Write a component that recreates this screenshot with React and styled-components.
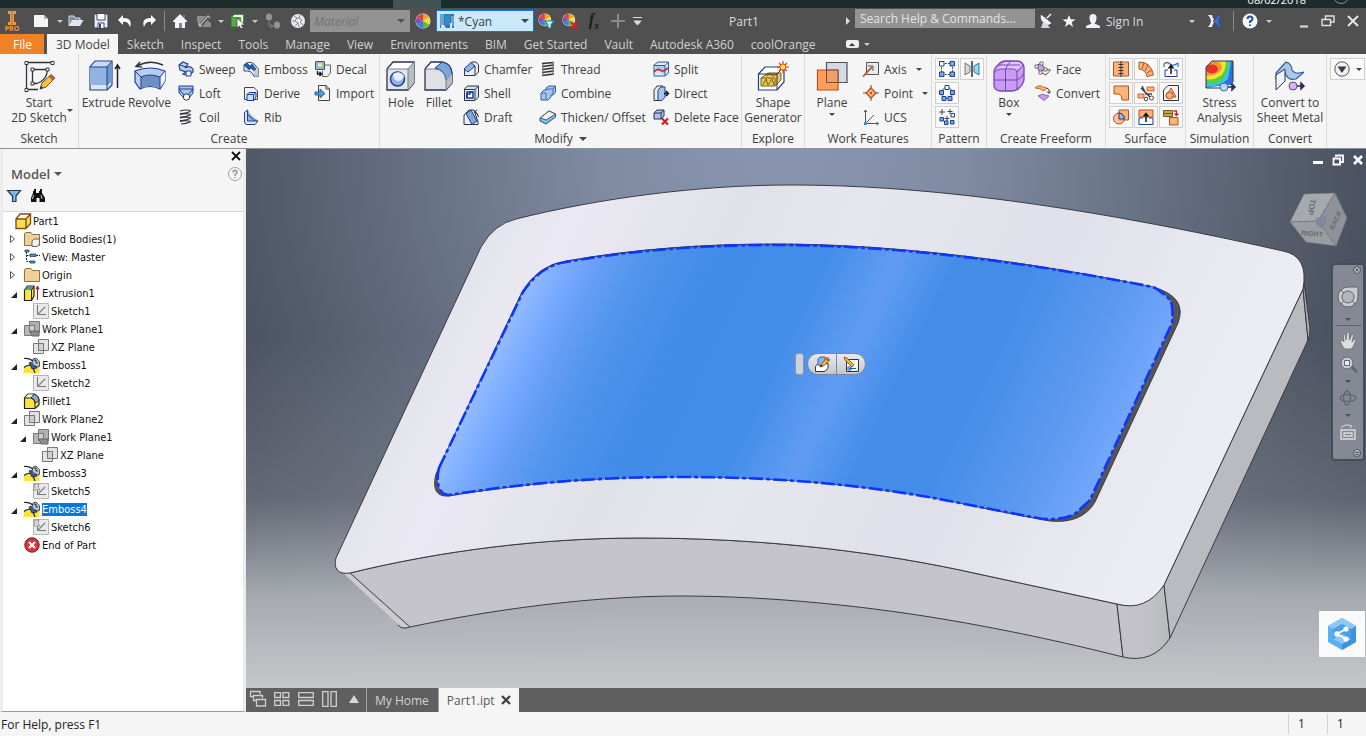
import React from "react";
import styled, { createGlobalStyle } from "styled-components";

const GlobalStyle = createGlobalStyle`
    * {
        box-sizing: border-box;
    }

    body {
        margin: 0;
        font-family: "Open Sans", "Noto Sans", sans-serif;
        font-size: 12px;
        line-height: 15px;
        color: #3c3c3c;
        background-color: #f5f5f5;
    }

    button, input, select {
        font: inherit;
        color: inherit;
        margin: 0;
    }

    button {
        border: none;
        padding: 0;
        background: none;
    }

    svg {
        display: block;
        flex: none;
    }
`;

/* ---------- drawings ---------- */

const NAVY = "#1d3f8f";
const INK = "#2b3350";
const SKY = "#9dbbe4";
const RUST = "#b5521b";
const PEACH = "#ffb27a";

const pencil = (
    <g>
        <path d="M0 9 2 5 8-2 11 1 5 7Z" fill="#f0b23c" stroke="#7a4a12" strokeWidth=".8" />
        <path d="M8-2 11 1 9 3 6 0Z" fill="#c06a3c" />
        <path d="M0 9 1 6 3 8Z" fill="#222" />
    </g>
);

const wheel = (
    <g>
        <circle cx="8" cy="8" r="7.5" fill="#e8e8e8" />
        <path d="M8 8V1a7 7 0 0 1 6.1 3.5Z" fill="#f4a12d" />
        <path d="M8 8 14.1 4.5a7 7 0 0 1 0 7Z" fill="#f2e03a" />
        <path d="M8 8 14.1 11.5A7 7 0 0 1 8 15Z" fill="#57b947" />
        <path d="M8 8V15a7 7 0 0 1-6.1-3.5Z" fill="#3c7fd6" />
        <path d="M8 8 1.9 11.5a7 7 0 0 1 0-7Z" fill="#7a4fc0" />
        <path d="M8 8 1.9 4.5A7 7 0 0 1 8 1Z" fill="#e2413a" />
    </g>
);

const folder = (
    <path d="M.5 14.5V2.5L2 1.5H7L8.5 3.5H15.5V14.5Z" fill="#f2cf96" stroke="#8f6f42" />
);

const planes = (dark) => (
    <g>
        <path d="M5.5.5H15.5V11.5H5.5Z" fill={dark ? "#b0b0b0" : "#e2e2e2"} stroke="#777" />
        <path d="M.5 4.5H10.5V14.5H.5Z" fill={dark ? "#a6a6a6" : "#ddd"} fillOpacity=".8" stroke="#777" />
        <path d="M5.5 4.5H10.5V11.5H5.5Z" fill="#cfcfcf" stroke="#777" />
    </g>
);

const sketchGlyph = (
    <g>
        <path d="M.5.5H15.5V15.5H.5Z" fill="#e9e9e9" stroke="#b5b5b5" />
        <path d="M4.5 2V11.5H13" fill="none" stroke="#777" />
        <path d="M5 11 12 4" stroke="#888" strokeWidth="1.4" />
    </g>
);

const glyphs = {
    newFile: (
        <g>
            <path d="M1 2H11L15 6V14H1Z" fill="#f4f4f6" />
            <path d="M11 2V6H15Z" fill="#aaaeb8" />
        </g>
    ),
    open: (
        <g>
            <path d="M1 13V3H6L7 5H12V7" fill="#7f8da5" stroke="#d7dde8" />
            <path d="M1 13 4 7H15.5L12 13Z" fill="#dfe5ef" />
        </g>
    ),
    save: (
        <g>
            <path d="M1 1H14L15 2V15H1Z" fill="#e9ecf2" stroke="#2f3b55" />
            <path d="M4 1V7H12V1M5 15V10H11V15" fill="#fff" stroke="#3c4965" />
            <path d="M6 11H8V15H6Z" fill="#3c4965" />
        </g>
    ),
    undo: <path d="M6 2 1 7 6 12V9Q11 8 13 14 16 5 6 5Z" fill="#fff" />,
    redo: <path d="M10 2 15 7 10 12V9Q5 8 3 14 0 5 10 5Z" fill="#fff" />,
    home: (
        <g>
            <path d="M8 1 15 8V9H13V15H3V9H1V8Z" fill="#f4f5f8" />
            <path d="M7 10H10V15H7ZM11 2H13V5L11 3Z" fill="#7c879c" />
        </g>
    ),
    swap: (
        <g fill="#8d8d8d">
            <path d="M1 3H10L5 9H1ZM15 14H6L11 7 15 10Z" />
            <path d="m3 13 9-10 2 2M3 13l3 0M3 13V9" fill="none" stroke="#b3b3b3" strokeWidth="1.4" />
        </g>
    ),
    select: (
        <g>
            <path d="M1.500 4.500 4 1.500H13.500V10L11 13.500H1.500Z" fill="#e8f5e2" stroke="#3e9a2c" />
            <path d="M1.500 4.500H10.500V13.500H1.500Z" fill="#57a846" stroke="#3e9a2c" />
            <path d="M7 5V15L9.500 13 11 16 13 15 11.500 12H15Z" fill="#fff" stroke="#333" strokeWidth=".7" />
        </g>
    ),
    parts: (
        <g fill="#929292">
            <path d="M1 2 4 0 7 2V6L4 8 1 6ZM9 10 12 8 15 10V14L12 16 9 14Z" />
            <path d="M4 9V13H8M6 11 8 13 6 15" fill="none" stroke="#858585" />
        </g>
    ),
    sphere: (
        <g>
            <circle cx="8" cy="8" r="7" fill="#e9e9ec" />
            <path d="M4 3 7 5 5 8 8 10 5 13M10 2 9 5 12 7 10 9 13 12M2 8H5M8 10 9 14M7 5H9" fill="none" stroke="#85878e" />
        </g>
    ),
    wheel,
    wheelPick: (
        <g>
            <g transform="scale(.85)">{wheel}</g>
            <path d="M7 8H16L13 11.5V15H10V11.500Z" fill="#d9f1fb" stroke="#0b86b8" />
        </g>
    ),
    wheelClear: (
        <g>
            <g transform="scale(.85)">{wheel}</g>
            <path d="M9 9 15.5 15.5M15.5 9 9 15.5" stroke="#e01f1f" strokeWidth="2" />
        </g>
    ),
    plus: <path d="M8 1V15M1 8H15" stroke="#8b8b8b" strokeWidth="2" />,
    more: <path d="M3 4.500H12M4 8H11L7.500 12Z" fill="#ddd" stroke="#ddd" />,
    swatch: (
        <g>
            <path d="M1 1H15V15H1Z" fill="#2f78b4" />
            <path d="M1 1H5V12H1ZM12 3H15V13H12Z" fill="#6ea6d2" />
            <path d="M6 2H11V12H6Z" fill="#3d89c6" />
            <path d="M2 15V12H5L7 15ZM11 15V10H13V15Z" fill="#dbe6ee" />
        </g>
    ),
    dish: (
        <g>
            <path d="M3 1Q1 9 10 12L14 10Z" fill="#f2f3f6" />
            <path d="M8 6 13 1" stroke="#f2f3f6" strokeWidth="1.500" />
            <path d="M5 9 3 15H12L9 11Z" fill="#d5d7dd" />
            <path d="M3 1 14 10" stroke="#444" />
        </g>
    ),
    star: <path d="M8 1 10 6H15.500L11 9.500 13 15 8 11.500 3 15 5 9.500.5 6H6Z" fill="#f4f4f6" stroke="#333" strokeWidth=".6" />,
    person: (
        <path d="M8 1Q12 1 11.500 6 11 9 9.500 10.500L15 13V15H1V13L6.500 10.500Q5 9 4.500 6 4 1 8 1Z" fill="#f0f1f4" />
    ),
    exchange: (
        <g>
            <path d="M1 2H5Q6 7 9 8 6 9 5 14H1Q4 11 4 8 4 5 1 2Z" fill="#e9edf7" />
            <path d="M15 2H11Q9 6 6 8 9 10 11 14H15Q12 11 12 8 12 5 15 2Z" fill="#3f6cc8" stroke="#1f3f90" strokeWidth=".6" />
        </g>
    ),
    help: (
        <g>
            <circle cx="8" cy="8" r="7.500" fill="#f6f6f8" />
            <path d="M5.500 6Q5.500 3.500 8 3.500T10.500 6Q10.500 7.500 8 8.500V10M8 11.500V13" fill="none" stroke="#2450a8" strokeWidth="2" />
        </g>
    ),
    minimize: <path d="M4 13.500H12" stroke="#e2e2e2" strokeWidth="2" />,
    restore: <path d="M5.500 6V3H14V9H10.500M2 6.500H10.500V12.500H2Z" fill="none" stroke="#e2e2e2" strokeWidth="1.400" />,
    close: <path d="m3 3 10 10M13 3 3 13" stroke="#e6e6e6" strokeWidth="2" />,
    sketch2d: (
        <g>
            <path d="M30 2.500H3.500V30M3.500 2.500V29.500H15M10 9.500H26M9.500 9V24M9.500 23.500H14Q24 20 24.500 9.500" fill="none" stroke="#30343c" strokeWidth="1.300" />
            <g fill="#fff" stroke="#30343c">
                <path d="M2 1.500H5V4.500H2ZM28 1.500H31V4.500H28ZM2 28.500H5V31.500H2ZM8 8H11V11H8ZM23 8H26V11H23ZM8 22H11V25H8Z" />
            </g>
            <path d="M17 29 19 23 28 14.500 32 18 23 27Z" fill="#f5c242" stroke="#7a4a12" />
            <path d="M28 14.500 32 18 29.500 20.500 25.500 17Z" fill="#b5683e" />
            <path d="M17 29 18 26 20 28Z" fill="#222" />
        </g>
    ),
    extrude: (
        <g>
            <path d="M2 7 7 1H24V25L19 30H2Z" fill="#dfe5ee" stroke={NAVY} strokeWidth="1.200" />
            <path d="M2 7H19V25H2Z" fill="#8fb3e2" />
            <path d="M3 6.500 7 2H23L19 6.500Z" fill="#c9dbf2" />
            <path d="M19 7 24 1V21L19 26Z" fill="#6f97cf" />
            <path d="M2 7H19V30M19 7 24 1" fill="none" stroke={NAVY} />
            <path d="M29.500 28V5M27 9 29.500 5 32 9" fill="none" stroke="#222" strokeWidth="1.500" />
        </g>
    ),
    revolve: (
        <g>
            <path d="M1 11Q16 5 31 11V21L26 29Q16 24 6 29L1 22Z" fill="#b7cdee" stroke={NAVY} strokeWidth="1.200" />
            <path d="M7 17Q16 13 26 17V28Q16 24 7 28Z" fill="#6f8fc4" />
            <path d="M26 17 31 11V21L26 28Z" fill="#f3f5f9" />
            <path d="M1 11 7 17V28M7 17Q16 13 26 17V28M26 17 31 11" fill="none" stroke={NAVY} />
            <path d="M3 6Q16-1 29 5M6 2 2 6.500 8 7" fill="none" stroke="#30343c" strokeWidth="1.500" />
        </g>
    ),
    sweep: (
        <g>
            <path d="M1 4 5 1 10 3 7 7Q12 4 15 8V11L11 14H8L5 13 8 11 2 9Z" fill="#b9d0ee" stroke={NAVY} strokeWidth="1.200" />
            <path d="M2 4 8 6M8 10H13V15H8Z" fill="#eef3fa" stroke={NAVY} />
        </g>
    ),
    loft: (
        <g>
            <path d="M1 1H15V8L11 13H6L1 8Z" fill="#a9c4ea" stroke={NAVY} />
            <path d="M1 4H15M1 4 6 10M15 4 10 10" fill="none" stroke={NAVY} />
            <circle cx="8.500" cy="12" r="3.200" fill="#fff" stroke={INK} />
        </g>
    ),
    coil: (
        <path d="M2 2Q8 0 13 2M13 2Q8 5 2 4.500M2 5.500Q8 4 13 5.500M13 5.500Q8 8.500 2 8M2 9Q8 7.500 13 9M13 9Q8 12 2 11.500M2 12.500Q8 11 13 12.500M13 12.500Q8 15 3 15" fill="none" stroke="#33363c" strokeWidth="1.200" />
    ),
    embossTool: (
        <g>
            <path d="M1 4Q6-1 11 3L15.500 8V15.500H11Q9 9 1 10Z" fill="#e4e8ef" stroke={INK} strokeWidth=".9" />
            <path d="M1 4 4 2 7 5 9 3 13 8 11 10 8 7 6 9Z" fill="#1f5fa8" stroke={NAVY} strokeWidth=".6" />
            <path d="M11 10 15.500 8V15.500H11Z" fill="#c3c7cf" />
        </g>
    ),
    derive: (
        <g>
            <path d="M1.500 14.500V2.500H11L14.500 6V14.500Z" fill="#f2f2f2" stroke="#444" />
            <path d="M4 9.500 6 7.500H13V12L11 15.500H4Z" fill="#bfe0f4" stroke={NAVY} />
            <path d="M4 9.500H10.500V15M10.500 9.500 13 7.500" fill="none" stroke={NAVY} />
        </g>
    ),
    rib: (
        <g>
            <path d="M1.500 3.500 4.500 1 6 7 15 12 12 15.500H3L1.500 13Z" fill="#dbe6f5" stroke={NAVY} />
            <path d="M4.500 2V12H14M5 6 12 12" fill="#8fb3e2" stroke={NAVY} />
        </g>
    ),
    decal: (
        <g>
            <path d="M10 4H15.500V12L12.500 15.500H7.500V10" fill="#eee" stroke="#666" />
            <path d="M.5.5H9.500V8.500H.5Z" fill="#8fb6e8" stroke="#555" />
            <circle cx="5" cy="4" r="2" fill="#f6f27a" />
            <path d="M2.500 10V13H6M4.500 11 6.500 13 4.500 15" fill="none" stroke="#111" strokeWidth="1.400" />
        </g>
    ),
    importTool: (
        <g>
            <path d="M3.500 15.500V.5H11L14.500 4V15.500Z" fill="#f5f5f5" stroke="#444" />
            <path d="M11 .5V4H14.500" fill="none" stroke="#444" />
            <path d="M0 7H5V4L10 8.500 5 13V10H0Z" fill="#4ea0dc" stroke="#154f8a" strokeWidth=".8" />
        </g>
    ),
    hole: (
        <g>
            <path d="M2 9 8 2H29V23L23 30H2Z" fill="#e2e4e8" stroke={INK} strokeWidth="1.300" />
            <path d="M3 9 8.500 3H28L23 9Z" fill="#fff" />
            <path d="M23 9 29 2V23L23 30Z" fill="#b9bcc3" />
            <path d="M2 9H23V30M23 9 29 2" fill="none" stroke="#777c88" />
            <circle cx="12.500" cy="19" r="7" fill="#8fb3e2" stroke={NAVY} strokeWidth="1.500" />
            <path d="M8 14A7 7 0 0 1 19 16Q17 22 12 21 8 19 8 14Z" fill="#e4effb" />
        </g>
    ),
    fillet: (
        <g>
            <path d="M2 9 8 2H19Q29 4 29 14V23L23 30H2Z" fill="#dfe1e6" stroke={INK} strokeWidth="1.300" />
            <path d="M3 9 8.500 3H18L13 9Z" fill="#fff" />
            <path d="M12 8 19 2Q29 4 29 15L23 20Q22 10 12 8Z" fill="#7ba6dd" stroke={NAVY} />
            <path d="M23 20 29 14V23L23 30Z" fill="#b9bcc3" />
            <path d="M2 9H12Q22 10 23 20V30" fill="none" stroke="#777c88" />
        </g>
    ),
    chamfer: (
        <g>
            <path d="M1.500 9V14.500H12L15.500 11V4L13 1H9Z" fill="#eee" stroke={INK} />
            <path d="M1 8 8 1.500 12 5 5 11Z" fill="#8fb3e8" stroke={NAVY} />
            <path d="M12 5V14.500" stroke={INK} />
        </g>
    ),
    shell: (
        <g>
            <path d="M1.500 4 4.500 1H15.500V12L12 15.500H1.500Z" fill="#d9e1ec" stroke={INK} />
            <path d="M1.500 4.500H12V15.500M12 4.500 15.500 1" fill="#eef1f6" stroke={INK} />
            <path d="M4 7H10V13H4Z" fill="#fff" stroke={NAVY} strokeWidth="1.500" />
            <path d="M4 13V9H7V7H10" fill="none" stroke={NAVY} strokeWidth="1.500" />
        </g>
    ),
    draft: (
        <g>
            <path d="M1 6 6 1 11 1 15 13V15.500H1Z" fill="#eceef2" stroke={INK} />
            <path d="M3 4.500 8 1 14 12 9 15.500Z" fill="#7fa6de" stroke={NAVY} />
            <path d="M15.500 8Q15 4 12 3M14 1 11.500 3 14 5" fill="none" stroke="#222" />
        </g>
    ),
    thread: (
        <g>
            <path d="M3 1H13V15H3Z" fill="#eee" />
            <path d="M2 2.500 14 1.500M2 5.500 14 4M2 8.500 14 7M2 11.500 14 10M2 14.500 14 13" stroke="#333" strokeWidth="1.300" />
            <path d="M3 3V15M13 1V14" stroke="#777" />
        </g>
    ),
    combine: (
        <g>
            <path d="M1 8 4 5H6V3L9 1H15.500V7L13 10H11V12L8 15H1Z" fill="#a9c4ea" stroke="#2c5fa8" />
            <path d="M6 5 8 4H13V10M1 8H6V15M13 4 15 1" fill="none" stroke="#2c5fa8" strokeWidth=".8" />
        </g>
    ),
    thicken: (
        <g>
            <path d="M0 9 9 2 15.500 5V8L6 15 0 12Z" fill="#7cc0ea" stroke="#28506f" />
            <path d="M0 9 9 2 15.500 5 6 11Z" fill="#f2f2f2" stroke="#555" />
        </g>
    ),
    split: (
        <g>
            <path d="M1 4 5 1H15.500V12L12 15H1Z" fill="#dce8f6" stroke="#2c5fa8" />
            <path d="M1 4.500H12V15M12 4.500 15.500 1" fill="#a9cdf0" stroke="#2c5fa8" />
            <path d="M1 11Q4 7 7 9T12 9L15 7" fill="none" stroke="#d21f1f" strokeWidth="1.600" />
        </g>
    ),
    direct: (
        <g>
            <path d="M1 5 4 1H10L8 4V15.500H1Z" fill="#e4eaf3" stroke={INK} />
            <path d="M5 5 8 2H12V12L9 15.500H5Z" fill="#a9c4ea" stroke={NAVY} />
            <path d="M11 8.500H15M13 6 15.500 8.500 13 11" fill="none" stroke="#111" strokeWidth="1.500" />
        </g>
    ),
    deleteFace: (
        <g>
            <path d="M1 4 4 1H11V7L8 10H1Z" fill="#a9c4ea" stroke={INK} />
            <path d="M1 4H8V10M8 4 11 1" fill="none" stroke={INK} />
            <path d="m9 9.500 6 6m0-6-6 6" stroke="#c8171c" strokeWidth="2" />
        </g>
    ),
    shapeGen: (
        <g>
            <path d="M1.500 14 8 7H27V22L20 30H1.500Z" fill="#fff" stroke={NAVY} strokeWidth="1.200" />
            <path d="M4 18 11 13 24 13V20L18 26H4Z" fill="#e9c75a" stroke="#7c6215" />
            <path d="M4 18H18V26M6 25 9 19 11 25 15 19 17 25M9 16 13 14 16 16 20 14" fill="none" stroke="#7c6215" />
            <path d="M1.500 14H20V30M20 14 27 7" fill="none" stroke={INK} />
            <path d="M26 1V13M20 7H32M22 3 30 11M30 3 22 11" stroke="#e0461a" strokeWidth="1.200" />
            <circle cx="26" cy="7" r="3" fill="#ffec4d" stroke="#e0461a" />
        </g>
    ),
    plane: (
        <g>
            <path d="M10.500 2.500H31V22.500H10.500Z" fill="#d4d9e2" stroke="#4a505c" strokeWidth="1.200" />
            <path d="M1.500 10H22V30H1.500Z" fill="#ff9d5c" stroke={RUST} strokeWidth="1.200" />
            <path d="M10.500 10H22V22.500H10.500Z" fill="#eda06c" stroke="#7c4a2c" />
        </g>
    ),
    axis: (
        <g>
            <path d="M3.500 1.500H15.500V13.500H3.500Z" fill="#e8eaee" stroke="#555" />
            <path d="M0 15.500 9 6" stroke={RUST} strokeWidth="1.800" />
            <path d="M5 5H10V10" fill="none" stroke="#555" />
        </g>
    ),
    point: (
        <g>
            <path d="M8 0V16M0 8H16" stroke="#555" />
            <path d="M8 3 13 8 8 13 3 8Z" fill={PEACH} stroke={RUST} strokeWidth="1.300" />
            <path d="M7 7H9V9H7Z" fill={RUST} />
        </g>
    ),
    ucs: (
        <g>
            <path d="M2.500 1V14.500H15.500M3 14 11 6M1 3 2.500 1 4 3M13.500 13 15.500 14.500 13.500 16" fill="none" stroke="#555" />
            <path d="M1 13H4V16H1Z" fill="#3f8ce8" />
        </g>
    ),
    rectPattern: (
        <g>
            <path d="M3 2.500H13M3 13.500H13M2.500 3V13M13.500 3V13" stroke="#555" strokeDasharray="2 1" />
            <path d="M.5.5H5V5H.5Z" fill="#fff" stroke={NAVY} />
            <path d="M11 .5H15.500V5H11ZM.5 11H5V15.500H.5ZM11 11H15.500V15.500H11Z" fill="#7aa8e6" stroke={NAVY} />
        </g>
    ),
    mirror: (
        <g>
            <path d="M1 2 6 5V11L1 14Z" fill="#d8d8d8" stroke="#777" />
            <path d="M15 2 10 5V11L15 14Z" fill="#9ed4f2" stroke="#2a7db0" />
            <path d="M8 0V16" stroke="#111" strokeWidth="1.300" />
        </g>
    ),
    circPattern: (
        <g>
            <circle cx="8" cy="8" r="5.500" fill="none" stroke="#555" />
            <path d="M6 .5H10V4.500H6Z" fill="#fff" stroke={NAVY} />
            <path d="M.5 5.500H4.500V9.500H.5ZM11.500 5.500H15.500V9.500H11.500ZM3 11.500H7V15.500H3ZM9 11.500H13V15.500H9Z" fill="#7aa8e6" stroke={NAVY} />
        </g>
    ),
    sketchPattern: (
        <g>
            <path d="M3 0V6M0 3H6M11 0V5M8.500 2.500H13.500M8 7V12M5.500 9.500H10.500" stroke="#444" />
            <path d="M12 4.500H15.500V8H12Z" fill="#fff" stroke={NAVY} />
            <path d="M1 8.500H4.500V12H1ZM5.500 12H9V15.500H5.500ZM11.500 11.500H15V15H11.500Z" fill="#7aa8e6" stroke={NAVY} />
        </g>
    ),
    box: (
        <g>
            <path d="M1 12Q1 8 5 5 8 1 13 1H25Q30 2 31 7V19Q31 23 27 27 24 31 19 31H7Q1 30 1 25Z" fill="#c79cf2" stroke="#7a44b4" strokeWidth="1.300" />
            <path d="M3 11Q8 3 13 2H25Q29 3 29 6L24 9H7Z" fill="#e2c9fb" />
            <path d="M1 13Q3 9 8 9H20Q24 9 24 14V29M24 12Q28 8 30 5M12.500 9V31M12.500 9Q15 4 18 1M1 20H24Q29 18 31 13M5 5H27" fill="none" stroke="#7a44b4" />
        </g>
    ),
    face: (
        <g>
            <path d="M1 5 6 2 10 8 5 11Z" fill="#c79cf2" stroke="#555" />
            <path d="M5 11 10 8 15.500 9 11 14Z" fill="#eee" stroke="#555" />
            <path d="M0 4H3V7H0ZM5 1H8V4H5ZM9 7H12V10H9ZM4 10H7V13H4Z" fill="#fff" stroke="#555" strokeWidth=".8" />
        </g>
    ),
    convertTool: (
        <g>
            <path d="M0 3Q4-1 8 2L12 3 9 6Q5 3 0 3Z" fill={PEACH} stroke={RUST} strokeWidth=".8" />
            <path d="M3 11Q7 8 10 10L14 11 9 15.500Q6 13 3 11Z" fill="#c79cf2" stroke="#7a44b4" strokeWidth=".8" />
            <path d="M12 3Q15 4 14 8M12 6.500 14 8.500 15.500 6.500" fill="none" stroke="#333" />
        </g>
    ),
    stitch: (
        <g>
            <path d="M.5 1H15.500V15H.5Z" fill={PEACH} stroke={RUST} />
            <path d="M8 0V16M5.500 3.500H10.500M5.500 6.500H10.500M5.500 9.500H10.500M5.500 12.500H10.500" stroke="#333" />
        </g>
    ),
    ruled: (
        <g stroke={RUST}>
            <path d="M1 1Q13 1 15.500 14L9 15.500Q8 9 1 8Z" fill={PEACH} />
            <path d="M6 2 4 8M10 4 7 10M14 9 9 12" />
        </g>
    ),
    thickenSurface: (
        <g>
            <path d="M1 3Q4 0 7 3T15 2M1 3V6M15 2V6" fill="none" stroke="#2c70c0" strokeWidth="1.200" />
            <path d="M5 9H2V15.500H14V9H11" fill="#fff" stroke={NAVY} />
            <path d="M8 13V5M5.500 7.500 8 4.500 10.500 7.500" fill="none" stroke="#111" strokeWidth="1.500" />
        </g>
    ),
    patch: <path d="M1 1H15.500V15H9Q9 10 6 9H1Z" fill={PEACH} stroke={RUST} />,
    trim: (
        <g>
            <path d="M9 2H16V6H9ZM0 9H6V13H0Z" fill={PEACH} stroke={RUST} strokeWidth=".8" />
            <path d="M3 3 12 12M4 1 8 9 14 9" fill="none" stroke="#444" strokeWidth="1.500" />
            <circle cx="13.500" cy="13" r="2" fill="#fff" stroke="#444" />
            <circle cx="8" cy="14" r="1.800" fill="#fff" stroke="#444" />
        </g>
    ),
    repair: (
        <g>
            <path d="M5 .5H15.500V15.500H.5V5Z" fill="#f1f1f1" stroke={INK} />
            <path d="M8 3 13 12H3Z" fill={PEACH} stroke={RUST} />
            <circle cx="6.500" cy="10.500" r="3.500" fill={PEACH} fillOpacity=".7" stroke={RUST} />
        </g>
    ),
    sculpt: (
        <g>
            <path d="M6 1H15.500V11H6Z" fill={PEACH} stroke={RUST} />
            <circle cx="6" cy="9.500" r="5.500" fill={PEACH} fillOpacity=".8" stroke={RUST} />
            <path d="M6 4Q11 5 11.500 10H6Z" fill={SKY} stroke={NAVY} />
        </g>
    ),
    extend: (
        <g>
            <path d="M1 1H15V8H1Z" fill={PEACH} stroke={RUST} />
            <path d="M5 9H1V15.500H15V9H11" fill="#fff" stroke={NAVY} />
            <path d="M8 13V5M5.500 7.500 8 4.500 10.500 7.500" fill="none" stroke="#111" strokeWidth="1.500" />
        </g>
    ),
    replace: (
        <g>
            <path d="M.5 1.500H9.500V7.500H.5Z" fill="#c9a94e" stroke="#6f5b1c" />
            <path d="M1 4.500H9" stroke="#6f5b1c" />
            <path d="M6.500 8.500H15V16H6.500Z" fill={PEACH} stroke={RUST} />
            <path d="M10.500 2H13.500V6M11.500 4.500 13.500 6.500 15.500 4.500" fill="none" stroke="#d21f1f" strokeWidth="1.300" />
        </g>
    ),
    stress: (
        <g>
            <path d="M2 7 8 1H29V25H20L2 28Z" fill="#2f6fe0" />
            <path d="M2 7 8 1H27L24 19Q15 27 2 27Z" fill="#35c5e8" />
            <path d="M2 7 8 1H25Q24 14 18 20 10 25 2 24Z" fill="#57cf3d" />
            <path d="M2 7 8 1H22Q22 12 16 16 9 21 2 19Z" fill="#f3e334" />
            <path d="M2 7 7 2Q18 0 18 8 16 15 2 16Z" fill="#f59a25" />
            <ellipse cx="8" cy="9" rx="6" ry="4.500" fill="#e8322c" />
            <path d="M2 7 8 1H29V22M2 7V28H16" fill="none" stroke={INK} />
            <circle cx="20" cy="27" r="4" fill="#b9d6f4" stroke="#3c6fae" />
            <path d="M24 27H30M28 24 31 27 28 30Z" fill={INK} stroke={INK} strokeWidth="1.500" />
        </g>
    ),
    sheet: (
        <g>
            <path d="M2 13 12 2Q18 4 18 10 21 15 30 12L22 19Q14 21 11 13 9 9 2 18Z" fill="#a9c8ec" stroke="#2f5f9f" strokeWidth="1.200" />
            <path d="M2 15 11 9V21L2 30Z" fill="#eef3f9" stroke={INK} />
            <circle cx="19" cy="26" r="4" fill="#d2b6f0" stroke="#6b3fa6" />
            <path d="M23 26H29M27 23 30 26 27 29Z" fill="#35205c" stroke="#35205c" strokeWidth="1.500" />
        </g>
    ),
    overflow: (
        <g>
            <circle cx="8" cy="8" r="7.200" fill="#f2f2f2" stroke="#555" />
            <path d="M3.500 5.500H12.500L8 12Z" fill="#333c4c" />
        </g>
    ),
    panelClose: <path d="m4 4 8 8M12 4 4 12" stroke="#111" strokeWidth="1.800" />,
    panelHelp: (
        <g>
            <circle cx="8" cy="8" r="6.500" fill="none" stroke="#a0a0a0" />
            <path d="M6 6.500Q6 4.500 8 4.500T10 6.500Q10 7.500 8 8.500V10M8 11V12" fill="none" stroke="#8c8c8c" strokeWidth="1.300" />
        </g>
    ),
    filter: <path d="M1.500 2.500H14.500L10 8V13.500H6.500V8Z" fill="#86b5e2" stroke="#143c66" strokeWidth="1.200" />,
    binoculars: (
        <g>
            <path d="M3 3H6V5H9V3H12V5L15 10V14H9.500V10H6.500V14H1V10L3 5ZM4 1H6V3H4ZM10 1H12V3H10Z" fill="#111" />
            <path d="M3.500 7 2.500 11M11 7 12 11" stroke="#ccc" />
        </g>
    ),
    part: (
        <g>
            <path d="M1 6 5 1H15.500V10.500L11 15.500H1Z" fill="#fbe04a" />
            <path d="M1 6 5 1H15.500L11 6Z" fill="#fff" />
            <path d="M1 6 5 1H15.500V10.500L11 15.500H1ZM1 6H11V15.500M11 6 15.500 1" fill="none" stroke="#8c4a10" strokeWidth="1.400" />
        </g>
    ),
    bodies: (
        <g>
            {folder}
            <path d="M8 10 10 8H15.500V13L13.500 15.500H8Z" fill="#f0f0f0" stroke="#666" />
        </g>
    ),
    view: (
        <g>
            <path d="M2.500 3V12.500H6M2.500 6.500H6M12 6.500H16" fill="none" stroke="#222" strokeDasharray="2 1" />
            <path d="M1 1H5V3H1ZM6 5H12V7.500H6ZM6 12H11V14H6Z" fill="#4d8fc4" stroke="#1e4a74" strokeWidth=".8" />
        </g>
    ),
    folder,
    extrusion: (
        <g>
            <path d="M.5 5 3.500 1H10V11L7.500 15.500H.5Z" fill="#ffe23b" stroke="#222" strokeWidth="1.200" />
            <path d="M1 5 3.500 1.500H10L7.500 5Z" fill="#5d8bc2" />
            <path d="M7.500 5V15M7.500 5 10 1.500" stroke="#222" />
            <path d="M13.500 15V4M12 4 13.500 1 15 4Z" fill="#c8171c" stroke="#c8171c" />
        </g>
    ),
    sketch: sketchGlyph,
    sketchShared: (
        <g>
            {sketchGlyph}
            <path d="M1 1H6L5 4 7 7H0L2 4Z" fill="#ddd" stroke="#999" />
        </g>
    ),
    workPlane: (
        <g>
            {planes(true)}
            <path d="M6 10H15V15H8Z" fill="#8c8c8c" stroke="#666" />
        </g>
    ),
    planePair: planes(false),
    emboss: (
        <g>
            <path d="M0 10Q6 6 10 10L15.500 9V16H0Z" fill="#ffe23b" />
            <path d="M9 2 12 1 15.500 4.500V9.500L12 10 8 6Z" fill="#b9c3d8" stroke="#333" strokeWidth=".8" />
            <path d="M0 1.500Q5 .5 9 4M0 10.500Q6 6 9 10.500L11 16" fill="none" stroke="#222" strokeWidth="1.200" />
            <path d="M5 6 7 5 9 9 12 9 13 11 8 12ZM10 3H12L12 6H14" fill="#3d5f9c" stroke="#1c2846" strokeWidth=".8" />
        </g>
    ),
    filletNode: (
        <g>
            <path d="M.5 5 4 1H10Q15 3 15 8V12L11 15.500H.5Z" fill="#ffe23b" stroke="#222" strokeWidth="1.200" />
            <path d="M1 5 4 1.500H9L7 5Z" fill="#fff" />
            <path d="M7 5 10 1Q15 3 15 8L11 10Q11 6 7 5Z" fill="#8ea6cc" stroke="#222" strokeWidth=".8" />
            <path d="M.5 5H7Q11 6 11 10V15" fill="none" stroke="#222" />
        </g>
    ),
    end: (
        <g>
            <circle cx="8" cy="8" r="7.200" fill="#e0303a" stroke="#5c1a1c" />
            <path d="m5 5 6 6m0-6-6 6" stroke="#fff" strokeWidth="2.200" />
        </g>
    ),
    cascade: (
        <path d="M3 5.500H.5V.5H10V3M6 9.500H3.500V4.500H12.500V7M6.500 8.500H15.500V15H6.500Z" fill="none" stroke="#d0d0d0" strokeWidth="1.300" />
    ),
    tiles: <path d="M.7 1.700H6.500V6.500H.7ZM9 1.700H14.800V6.500H9ZM.7 9.500H6.500V14.300H.7ZM9 9.500H14.800V14.300H9Z" fill="none" stroke="#d0d0d0" strokeWidth="1.300" />,
    rows: <path d="M.7 1.700H15.300V6.500H.7ZM.7 9.500H15.300V14.300H.7Z" fill="none" stroke="#d0d0d0" strokeWidth="1.300" />,
    columns: <path d="M.7.7H6V15.300H.7ZM9 .7H14.300V15.300H9Z" fill="none" stroke="#d0d0d0" strokeWidth="1.300" />,
    up: <path d="M3 12H13L8 4Z" fill="#d8d8d8" />,
    tabClose: <path d="m4 4 8 8M12 4 4 12" stroke="#444" strokeWidth="2.400" />,
    editFeature: (
        <g>
            <path d="M1.500 10.500 4 7.500H14V12L11 15.500H1.500Z" fill="#fff" stroke={INK} />
            <path d="M4 9V3L6 1H11V8L9 10Z" fill="#8fb3e8" stroke="#3a62a8" />
            <g transform="translate(6 3) scale(.9)">{pencil}</g>
        </g>
    ),
    editSketch: (
        <g>
            <path d="M3 3.500H15.500V15.500H3.500V3.500" fill="#f4f4f4" stroke="#333" />
            <path d="M6 12.500H13M5 11H8V14H5Z" fill="#fff" stroke="#1d5fa8" />
            <path d="M1 1 4 2 11 9 9 11 2 4Z" fill="#f0b23c" stroke="#7a4a12" strokeWidth=".8" />
        </g>
    ),
};

const Icon = ({ name, size = 16 }) => (
    <svg width={size} height={size} viewBox={`0 0 ${size} ${size}`} overflow="visible" aria-hidden="true">
        {glyphs[name]}
    </svg>
);

const Caret = styled.span`
    width: 0;
    height: 0;
    border: solid transparent;
    border-width: ${(props) => (props.$big ? "4px 4px 0" : "3px 3px 0")};
    border-top-color: ${(props) => props.$color || "#444"};
`;

/* ---------- window frame ---------- */

const Shell = styled.div`
    display: flex;
    flex-direction: column;
    height: 100vh;
    min-width: 1280px;
    overflow: hidden;
`;

/* sliver of the desktop above the maximised window */
const Desktop = styled.div`
    display: flex;
    justify-content: flex-end;
    gap: 27px;
    height: 8px;
    flex: none;
    overflow: hidden;
    padding-right: 17px;
    background: linear-gradient(90deg, #1c2c2c 393px, #415352 393px, #415352 441px, #1c2c2c 441px);
    color: #fff;
    font-size: 11px;
    line-height: 0;
`;

const Bubble = styled.span`
    width: 16px;
    height: 16px;
    margin-top: -12px;
    border: 1px solid #8b9292;
    border-radius: 8px;
`;

const TitleBar = styled.header`
    display: flex;
    align-items: center;
    height: 26px;
    flex: none;
    background-color: #505050;
    color: #dcdcdc;
`;

const Tool = styled.button`
    display: flex;
    align-items: center;
    justify-content: center;
    flex: none;
    width: ${(props) => props.$width || 24}px;
    height: 22px;
`;

const AppButton = styled(Tool)`
    flex-direction: column;
    height: 24px;
    color: #f09a3e;
    font-size: 7px;
    line-height: 6px;
    font-weight: 700;
`;

const Separator = styled.span`
    flex: none;
    width: 1px;
    height: 20px;
    margin: 0 ${(props) => (props.$tight ? 0 : 3)}px;
    background-color: #8a8a8a;
`;

const Combo = styled.label`
    display: flex;
    align-items: center;
    gap: 2px;
    flex: none;
    width: ${(props) => (props.$active ? 98 : 100)}px;
    height: 22px;
    padding: 0 4px 0 2px;
    border: 1px solid ${(props) => (props.$active ? "#1177d7" : "#939393")};
    background-color: ${(props) => (props.$active ? "#cbe8f8" : "#939393")};
    color: ${(props) => (props.$active ? "#3c3c3c" : "#727272")};
    font-style: ${(props) => (props.$active ? "normal" : "italic")};

    select {
        appearance: none;
        flex: 1;
        min-width: 0;
        border: none;
        padding: 0 1px;
        background: none;
        opacity: 1;
    }
`;

const Formula = styled.span`
    font: italic 700 16px "Liberation Serif", serif;
    color: #1c1c1c;

    sub {
        font-size: 10px;
    }
`;

const DocTitle = styled.span`
    flex: 1;
    padding-left: 83px;
    overflow: hidden;
`;

const Pointer = styled.span`
    margin-right: 5px;
    border: solid transparent;
    border-width: 4px 0 4px 4px;
    border-left-color: #ddd;
`;

const Search = styled.input`
    flex: 0 1 180px;
    min-width: 0;
    height: 19px;
    padding: 0 5px;
    border: none;
    background-color: #939393;
    margin-bottom: 6px;
    align-self: flex-end;

    &::placeholder {
        color: #e4e4e4;
        opacity: 1;
    }
`;

const Account = styled.button`
    display: flex;
    align-items: center;
    gap: 5px;
    width: 112px;
    margin-left: 4px;
    padding-right: 2px;
    white-space: nowrap;

    ${Caret} {
        margin-left: auto;
    }
`;

const WindowButtons = styled.div`
    display: flex;
    margin-left: 20px;
`;

const TabBar = styled.nav`
    display: flex;
    height: 20px;
    flex: none;
    background-color: #505050;
`;

const Tab = styled.button`
    padding: 0 8px 0 9px;
    color: ${(props) => (props.$active ? "#444" : "#d0d0d0")};
    background-color: ${(props) => (props.$active ? "#f5f5f5" : "transparent")};
    white-space: nowrap;
`;

const FileTab = styled(Tab)`
    width: 44px;
    margin-right: 3px;
    background-color: #f08226;
    color: #fff;
`;

const TabToggle = styled.button`
    display: flex;
    align-items: center;
    gap: 5px;
    margin-left: 22px;

    i {
        display: flex;
        align-items: center;
        justify-content: center;
        width: 13px;
        height: 8px;
        border-radius: 2px;
        background-color: #eee;
    }

    i::after {
        content: "";
        border: solid transparent;
        border-width: 0 3px 3px;
        border-bottom-color: #333;
    }
`;

/* ---------- ribbon ---------- */

const Ribbon = styled.div`
    display: flex;
    height: 95px;
    flex: none;
    margin-bottom: -1px;
    background-color: #f5f5f5;
    border-bottom: 1px solid #8a90a0;
    z-index: 1;
`;

const GroupBox = styled.section`
    display: flex;
    flex-direction: column;
    flex: none;
    width: ${(props) => props.$width}px;
    padding-top: 3px;
    border-right: 1px solid #dcdcdc;
`;

const GroupBody = styled.div`
    display: flex;
    justify-content: ${(props) => (props.$center ? "center" : "flex-start")};
    height: 72px;
    padding-left: ${(props) => (props.$center ? 0 : props.$inset || 3)}px;
`;

const GroupLabel = styled.h2`
    display: flex;
    align-items: center;
    justify-content: center;
    gap: 6px;
    margin: 0;
    height: 19px;
    font-size: 12px;
    font-weight: 400;
`;

const LargeButton = styled.button`
    position: relative;
    display: flex;
    flex-direction: column;
    align-items: center;
    flex: none;
    width: ${(props) => props.$width || 45}px;
    padding-top: 3px;
    white-space: nowrap;

    svg {
        margin-bottom: 3px;
    }

    > ${Caret} {
        margin-top: 3px;
    }
`;

const CornerCaret = styled(Caret)`
    position: absolute;
    right: 0;
    bottom: 17px;
`;

const ToolColumn = styled.div`
    display: flex;
    flex-direction: column;
    flex: none;
    width: ${(props) => (props.$width ? props.$width + "px" : "auto")};

    ${LargeButton} + & {
        margin-left: 5px;
    }
`;

const SmallButton = styled.button`
    display: flex;
    align-items: center;
    gap: 5px;
    height: 24px;
    white-space: nowrap;

    ${Caret} {
        margin-left: 4px;
    }
`;

const ToolGrid = styled.div`
    display: grid;
    grid-template-columns: repeat(${(props) => props.$columns}, 24px);
    grid-auto-rows: 22px;
    gap: 2px 1px;
    padding-top: 1px;
`;

const GridButton = styled.button`
    display: flex;
    align-items: center;
    justify-content: center;
    gap: 6px;
    border: 1px solid #cfcfcf;
    background-color: #fafafa;
`;

const OverflowButton = styled(GridButton)`
    width: 35px;
    height: 22px;
    margin: 4px 0 0 3px;
`;

/* ---------- model browser ---------- */

const Workspace = styled.div`
    display: flex;
    flex: 1;
    min-height: 0;
`;

const Browser = styled.aside`
    display: flex;
    flex-direction: column;
    flex: none;
    width: 246px;
    padding-bottom: 3px;
    border-left: 3px solid #ececec;
    border-right: 3px solid #ececec;
    border-bottom: 1px solid #9a9a9a;
    background-color: #fff;
`;

const BrowserHead = styled.div`
    display: flex;
    flex-direction: column;
    height: 64px;
    flex: none;
    border-bottom: 1px solid #d6d6d6;
    background-color: #f5f5f5;
`;

const HeadRow = styled.div`
    display: flex;
    align-items: center;
    justify-content: ${(props) => (props.$end ? "flex-end" : "space-between")};
    height: ${(props) => (props.$end ? 15 : 22)}px;
    padding-left: 8px;
`;

const HeadTools = styled.div`
    display: flex;
    align-items: center;
    gap: 8px;
    height: 22px;
    padding-left: 3px;
`;

const ModelMenu = styled.button`
    display: flex;
    align-items: center;
    gap: 4px;
    font-size: 13px;
    font-weight: 600;
    color: #555;
`;

const Tree = styled.ul`
    margin: 0;
    padding: 0;
    list-style: none;
    font-family: "DejaVu Sans Condensed", "DejaVu Sans", sans-serif;
    font-size: 11px;
    color: #111;
`;

const TreeRow = styled.li`
    display: flex;
    align-items: center;
    gap: 2px;
    height: 18px;
    padding-left: ${(props) => (props.$depth ? props.$depth * 9 - 3 : 12)}px;
`;

const Twisty = styled.span`
    display: flex;
    flex: none;
    width: 13px;
`;

const TreeName = styled.span`
    line-height: 13px;
    background-color: ${(props) => (props.$selected ? "#0a78d7" : "transparent")};
    color: ${(props) => (props.$selected ? "#fff" : "inherit")};
    white-space: nowrap;
`;

/* ---------- viewport ---------- */

const Stage = styled.main`
    display: flex;
    flex-direction: column;
    flex: 1;
    min-width: 0;
`;

const Canvas = styled.div`
    position: relative;
    display: flex;
    flex: 1;
    min-height: 0;
    overflow: hidden;
    background:
        linear-gradient(rgba(170, 175, 185, 0) 35%, rgba(170, 175, 184, 0.3) 65%, rgba(184, 187, 192, 0.85) 83%, #c6c7ca 100%),
        radial-gradient(ellipse 62% 125% at 48% 0%, #8a96b0 0%, #808ca4 25%, #687285 52%, #4e5564 80%, #3d4350 100%);

    > svg {
        flex: 1;
        min-width: 0;
        height: 100%;
    }
`;

const CanvasControls = styled.div`
    position: absolute;
    top: 1px;
    right: 0;
    display: flex;
    gap: 4px;
`;

const CubeSpot = styled.div`
    position: absolute;
    top: 41px;
    right: 19px;
`;

const NavBar = styled.div`
    position: absolute;
    top: 115px;
    right: 1px;
    width: 34px;
    height: 198px;
    border: 2px solid #454c5a;
    border-radius: 4px;
    background-color: #858993;
`;

const MiniToolbar = styled.div`
    position: absolute;
    left: 49%;
    top: 38%;
    display: flex;
    gap: 3px;
    height: 22px;
`;

const Grip = styled.span`
    width: 9px;
    border: 1px solid #8794aa;
    border-radius: 3px;
    background-color: #cdd2da;
`;

const MiniButton = styled.button`
    display: flex;
    align-items: center;
    justify-content: center;
    width: 30px;
    border: 1px solid #7d8797;
    border-radius: ${(props) => (props.$last ? "0 11px 11px 0" : "11px 0 0 11px")};
    margin-left: ${(props) => (props.$last ? -4 : 0)}px;
    background: linear-gradient(#e8eaee, #c3c7cf);
`;

const ShareButton = styled.button`
    position: absolute;
    right: 1px;
    bottom: 31px;
    display: flex;
    align-items: center;
    justify-content: center;
    width: 46px;
    height: 46px;
    background-color: #fafafa;
`;

const DocBar = styled.div`
    display: flex;
    align-items: stretch;
    height: 24px;
    flex: none;
    background-color: #5f5f5f;
    color: #d2d2d2;
`;

const DocTab = styled.button`
    display: flex;
    align-items: center;
    gap: 3px;
    padding: 0 ${(props) => (props.$active ? 5 : 9)}px 0 8px;
    border-left: 1px solid #a0a0a0;
    background-color: ${(props) => (props.$active ? "#f5f5f5" : "transparent")};
    color: ${(props) => (props.$active ? "#555" : "inherit")};
    white-space: nowrap;
`;

const StatusBar = styled.footer`
    display: flex;
    align-items: center;
    height: 24px;
    flex: none;
    padding-left: 1px;
    background-color: #f5f5f5;
    color: #222;
`;

const StatusText = styled.span`
    flex: 1;
`;

const StatusCell = styled.span`
    width: 39px;
    padding-left: 9px;
    border-left: 1px solid #d0d0d0;
    line-height: 20px;
`;

/* ---------- pieces ---------- */

const Group = ({ title, width, center, inset, menu, children }) => (
    <GroupBox $width={width}>
        <GroupBody $center={center} $inset={inset}>
            {children}
        </GroupBody>
        <GroupLabel>
            {title}
            {menu ? <Caret $big /> : null}
        </GroupLabel>
    </GroupBox>
);

const Large = ({ icon, lines, width, menu, children }) => (
    <LargeButton $width={width}>
        <Icon name={icon} size={32} />
        {lines.map((line) => (
            <span key={line}>{line}</span>
        ))}
        {menu ? <Caret /> : null}
        {children}
    </LargeButton>
);

const Column = ({ items, width }) => (
    <ToolColumn $width={width}>
        {items.map(([icon, label, menu]) => (
            <SmallButton key={label}>
                <Icon name={icon} />
                {label}
                {menu ? <Caret /> : null}
            </SmallButton>
        ))}
    </ToolColumn>
);

const IconGrid = ({ columns, items }) => (
    <ToolGrid $columns={columns}>
        {items.map(([icon, label]) => (
            <GridButton key={icon} aria-label={label}>
                <Icon name={icon} />
            </GridButton>
        ))}
    </ToolGrid>
);

const PatternGrid = styled.div`
    ${GridButton}:nth-child(n + 3) {
        grid-column-start: 1;
    }
`;

const tabs = [
    "Sketch",
    "Inspect",
    "Tools",
    "Manage",
    "View",
    "Environments",
    "BIM",
    "Get Started",
    "Vault",
    "Autodesk A360",
    "coolOrange",
];

const nodes = [
    { name: "Part1", icon: "part", depth: 0 },
    { name: "Solid Bodies(1)", icon: "bodies", depth: 1, state: "closed" },
    { name: "View: Master", icon: "view", depth: 1, state: "closed" },
    { name: "Origin", icon: "folder", depth: 1, state: "closed" },
    { name: "Extrusion1", icon: "extrusion", depth: 1, state: "open" },
    { name: "Sketch1", icon: "sketch", depth: 2 },
    { name: "Work Plane1", icon: "workPlane", depth: 1, state: "open" },
    { name: "XZ Plane", icon: "planePair", depth: 2 },
    { name: "Emboss1", icon: "emboss", depth: 1, state: "open" },
    { name: "Sketch2", icon: "sketch", depth: 2 },
    { name: "Fillet1", icon: "filletNode", depth: 1 },
    { name: "Work Plane2", icon: "planePair", depth: 1, state: "open" },
    { name: "Work Plane1", icon: "workPlane", depth: 2, state: "open" },
    { name: "XZ Plane", icon: "planePair", depth: 3 },
    { name: "Emboss3", icon: "emboss", depth: 1, state: "open" },
    { name: "Sketch5", icon: "sketchShared", depth: 2 },
    { name: "Emboss4", icon: "emboss", depth: 1, state: "open", selected: true },
    { name: "Sketch6", icon: "sketchShared", depth: 2 },
    { name: "End of Part", icon: "end", depth: 1 },
];

const TreeNode = ({ name, icon, depth, state, selected }) => (
    <TreeRow $depth={depth}>
        {depth > 0 ? (
            <Twisty>
                {state ? (
                    <svg width="7" height="10" viewBox="0 0 7 10" overflow="visible" aria-hidden="true">
                        {state === "open" ? (
                            <path d="M8 4V10H2Z" fill="#222" />
                        ) : (
                            <path d="M1.500 1.500V8.500L5.500 5Z" fill="#fff" stroke="#555" />
                        )}
                    </svg>
                ) : null}
            </Twisty>
        ) : null}
        <Icon name={icon} />
        <TreeName $selected={selected}>{name}</TreeName>
    </TreeRow>
);

const TitleTools = () => (
    <>
        <AppButton aria-label="Application menu">
            <svg width="10" height="15" viewBox="0 0 10 15" aria-hidden="true">
                <path d="M1 0H9V3H7V11H9V14H1V11H3V3H1Z" fill="#f09a3e" />
                <path d="M5 0V14" stroke="#c5701e" />
            </svg>
            PRO
        </AppButton>
        <Tool $width={33} aria-label="New"><Icon name="newFile" /></Tool>
        <Tool $width={6} aria-label="New options"><Caret $color="#ccc" /></Tool>
        <Tool $width={26} aria-label="Open"><Icon name="open" /></Tool>
        <Tool aria-label="Save"><Icon name="save" /></Tool>
        <Tool aria-label="Undo"><Icon name="undo" /></Tool>
        <Tool aria-label="Redo"><Icon name="redo" /></Tool>
        <Separator />
        <Tool aria-label="Home"><Icon name="home" /></Tool>
        <Tool aria-label="Return"><Icon name="swap" /></Tool>
        <Tool $width={10} aria-label="Return options"><Caret $color="#ccc" /></Tool>
        <Tool aria-label="Select"><Icon name="select" /></Tool>
        <Tool $width={10} aria-label="Select options"><Caret $color="#ccc" /></Tool>
        <Tool $width={26} aria-label="Parts"><Icon name="parts" /></Tool>
        <Tool aria-label="Material browser"><Icon name="sphere" /></Tool>
        <Combo>
            <select aria-label="Material" disabled>
                <option>Material</option>
            </select>
            <Caret $big $color="#555" />
        </Combo>
        <Tool $width={26} aria-label="Appearance browser"><Icon name="wheel" /></Tool>
        <Combo $active>
            <Icon name="swatch" />
            <select aria-label="Appearance">
                <option>*Cyan</option>
            </select>
            <Caret $big />
        </Combo>
        <Tool aria-label="Adjust appearance"><Icon name="wheelPick" /></Tool>
        <Tool aria-label="Clear appearance"><Icon name="wheelClear" /></Tool>
        <Tool aria-label="Parameters"><Formula>f<sub>x</sub></Formula></Tool>
        <Tool aria-label="Add"><Icon name="plus" /></Tool>
        <Tool $width={16} aria-label="Customize"><Icon name="more" /></Tool>
    </>
);

const Model = () => (
    <svg viewBox="246 148 1120 540" preserveAspectRatio="xMidYMid slice" role="img" aria-label="Part model">
        <defs>
            <linearGradient id="top" gradientUnits="userSpaceOnUse" x1="410" y1="380" x2="1080" y2="700">
                <stop offset="0" stopColor="#e4e4ed" />
                <stop offset=".1" stopColor="#eae9f3" />
                <stop offset=".3" stopColor="#e1e1ea" />
                <stop offset=".45" stopColor="#e6e6ef" />
                <stop offset=".7" stopColor="#e0e0ea" />
                <stop offset="1" stopColor="#ececf5" />
            </linearGradient>
            <linearGradient id="pocket" gradientUnits="userSpaceOnUse" x1="481" y1="380" x2="1021" y2="638">
                <stop offset="0" stopColor="#93bbff" />
                <stop offset=".05" stopColor="#78aaff" />
                <stop offset=".1" stopColor="#659df5" />
                <stop offset=".16" stopColor="#4f94ed" />
                <stop offset=".27" stopColor="#418ce8" />
                <stop offset=".43" stopColor="#428de9" />
                <stop offset=".54" stopColor="#619cf4" />
                <stop offset=".63" stopColor="#438de9" />
                <stop offset=".75" stopColor="#438de9" />
                <stop offset=".9" stopColor="#5b99f0" />
                <stop offset="1" stopColor="#72a6fa" />
            </linearGradient>
            <linearGradient id="corner">
                <stop offset="0" stopColor="#c4c3cc" />
                <stop offset=".6" stopColor="#c1c1c5" />
                <stop offset="1" stopColor="#b9babe" />
            </linearGradient>
        </defs>
        <g stroke="#3a3a3e" strokeWidth="1" strokeLinejoin="round">
            <path d="M344 574 402 628 410 627 350 573Z" fill="#cbcbd0" stroke="none" />
            <path d="M350 573C440 551 540 538 640 538 750 538 860 549 960 570L1117 604 1123 657C1060 641 1000 629 960 622 870 606 770 596 680 596 590 596 490 610 410 627Z" fill="#c5c4cd" />
            <path d="M398 625Q402 630 410 627" fill="none" />
            <path d="M1117 604Q1146 610 1164 585L1170 638Q1153 664 1123 657Z" fill="url(#corner)" />
            <path d="M1164 585 1303 289 1308 340 1170 638Z" fill="#babbc0" />
            <path d="M1304 283 1310 328Q1310 336 1308 340L1303 289Z" fill="#a9abb1" />
            <path
                d="M336 558 481 247Q494 224 516 219C600 198 700 185 790 185 890 185 1040 196 1283 251Q1309 256 1303 289L1164 585Q1146 612 1117 604L960 570C860 549 750 538 640 538 540 538 440 551 350 573 338 575 333 568 336 558Z"
                fill="url(#top)"
            />
            <path
                d="M436 474 522 292Q538 265 566 261C640 248 710 244 775 244 900 244 1030 262 1153 287Q1188 297 1178 323L1095 502Q1082 524 1050 521 1000 512 960 503C860 483 770 477 680 477 590 477 520 484 449 496 434 497 433 486 436 474Z"
                fill="#55565b"
            />
        </g>
        <path
            d="M439 468 523 292Q540 266 566 262C640 249 710 245 775 245 900 245 1030 263 1153 287Q1160 290 1168 298 1174 302 1172 323L1090 500 1076 513Q1066 520 1043 519 1000 511 960 503C860 483 770 477 680 477 590 477 520 484 449 495 437 494 436 480 439 468Z"
            fill="url(#pocket)"
            stroke="#0c35ff"
            strokeWidth="2.600"
            strokeDasharray="14 3 4 3"
        />
    </svg>
);

const ViewCube = () => (
    <svg width="60" height="60" viewBox="0 0 60 60" aria-label="View cube">
        <g stroke="#72767d" strokeWidth=".8" strokeDasharray="5 2">
            <path d="M17 5 48 4 31 32 3 33Z" fill="#a6a9ae" />
            <path d="M48 4 60 29 49 57 31 32Z" fill="#8f9399" />
            <path d="M3 33 31 32 49 57 19 53Z" fill="#9a9da2" />
        </g>
        <path d="M29 29 38 27 40 34 34 39 29 35Z" fill="#7f899b" />
        <g fill="#666a72" fontFamily="Liberation Sans, sans-serif" fontSize="8" fontWeight="700" textAnchor="middle">
            <text transform="translate(25 18) rotate(100)" y="3">TOP</text>
            <text transform="translate(25 44) rotate(4)" fontSize="7" y="3">RIGHT</text>
            <text transform="translate(48 31) rotate(-65)" fontSize="7" y="3">BACK</text>
        </g>
    </svg>
);

const NavGlyphs = () => (
    <svg width="30" height="194" viewBox="0 0 30 194" aria-label="Navigation bar">
        <g fill="none" stroke="#50555f">
            <circle cx="24" cy="5" r="3.500" fill="#b5b8be" />
            <path d="m22.500 3.500 3 3m0-3-3 3" />
            <circle cx="24" cy="188" r="3.500" fill="#b5b8be" />
            <path d="M22 187.500H26M22.500 189.500H25.500" />
            <path d="M2 60.500H28" stroke="#5d626d" />
        </g>
        <path d="M5 32A10 10 0 0 1 15 22H25V32A10 10 0 0 1 5 32Z" fill="#c9cbd0" stroke="#60656f" />
        <circle cx="15" cy="32" r="6" fill="#b2b5bb" stroke="#60656f" />
        <path d="m8 25 3 3M22 39l-3-3M8 39l3-3" stroke="#60656f" />
        <path d="M12 53H18L15 56ZM12 115H18L15 118ZM12 149H18L15 152Z" fill="#4d525d" />
        <path d="M10 82 7 76 9 75 11 77 10 69 12 69 13 75 14 67 16 67 16.500 75 19 69 20.500 70 19 77 21 74 23 75 20 82 18 84H12Z" fill="#dcdde0" stroke="#60656f" strokeWidth=".7" />
        <path d="m18 101 6 6" stroke="#60656f" strokeWidth="3" />
        <circle cx="14" cy="98" r="6" fill="#c9cbd0" stroke="#60656f" />
        <path d="M11.500 95.500H16.500V100.500H11.500Z" fill="#eee" stroke="#60656f" />
        <ellipse cx="15" cy="133" rx="8" ry="3.500" fill="none" stroke="#60656f" strokeWidth="1.300" />
        <ellipse cx="14" cy="133" rx="3.500" ry="7" fill="none" stroke="#60656f" strokeWidth="1.300" />
        <path d="M8 165H22V174H8ZM11 168H19V171H11Z" fill="none" stroke="#dcdde0" strokeWidth="1.400" />
        <path d="M8 163Q12 158 19 161L17 163" fill="none" stroke="#dcdde0" />
    </svg>
);

const CanvasIcons = () => (
    <CanvasControls>
        <Tool $width={16} aria-label="Minimize document">
            <svg width="14" height="14" viewBox="0 0 14 14" aria-hidden="true">
                <path d="M2 9.500H12" stroke="#fff" strokeWidth="3" />
            </svg>
        </Tool>
        <Tool $width={16} aria-label="Restore document">
            <svg width="14" height="14" viewBox="0 0 14 14" aria-hidden="true">
                <path d="M5 4V2.500H12V9H10M2.500 5.500H9V11.500H2.500Z" fill="none" stroke="#fff" strokeWidth="1.800" />
            </svg>
        </Tool>
        <Tool $width={16} aria-label="Close document">
            <svg width="14" height="14" viewBox="0 0 14 14" aria-hidden="true">
                <path d="m3 3 8 8M11 3 3 11" stroke="#fff" strokeWidth="2.600" />
            </svg>
        </Tool>
    </CanvasControls>
);

const App = () => (
    <Shell>
        <GlobalStyle />
        <Desktop>
            08/02/2018
            <Bubble />
        </Desktop>
        <TitleBar>
            <TitleTools />
            <DocTitle>Part1</DocTitle>
            <Pointer />
            <Search type="search" aria-label="Search help" placeholder="Search Help & Commands..." />
            <Tool $width={22} aria-label="Communication center"><Icon name="dish" /></Tool>
            <Tool aria-label="Favorites"><Icon name="star" /></Tool>
            <Account>
                <Icon name="person" />
                Sign In
                <Caret $color="#ccc" />
            </Account>
            <Tool $width={36} aria-label="App exchange"><Icon name="exchange" /></Tool>
            <Separator $tight />
            <Tool $width={32} aria-label="Help"><Icon name="help" /></Tool>
            <Tool $width={6} aria-label="Help options"><Caret $color="#ccc" /></Tool>
            <WindowButtons>
                <Tool $width={24} aria-label="Minimize"><Icon name="minimize" /></Tool>
                <Tool $width={24} aria-label="Restore"><Icon name="restore" /></Tool>
                <Tool $width={26} aria-label="Close"><Icon name="close" /></Tool>
            </WindowButtons>
        </TitleBar>
        <TabBar>
            <FileTab>File</FileTab>
            <Tab $active>3D Model</Tab>
            {tabs.map((tab) => (
                <Tab key={tab}>{tab}</Tab>
            ))}
            <TabToggle aria-label="Ribbon options">
                <i />
                <Caret $color="#ccc" />
            </TabToggle>
        </TabBar>
        <Ribbon>
            <Group title="Sketch" width={79} center>
                <Large icon="sketch2d" lines={["Start", "2D Sketch"]} width={68}>
                    <CornerCaret />
                </Large>
            </Group>
            <Group title="Create" width={301} inset={2}>
                <Large icon="extrude" lines={["Extrude"]} />
                <Large icon="revolve" lines={["Revolve"]} width={47} />
                <Column
                    width={65}
                    items={[["sweep", "Sweep"], ["loft", "Loft"], ["coil", "Coil"]]}
                />
                <Column
                    width={72}
                    items={[["embossTool", "Emboss"], ["derive", "Derive"], ["rib", "Rib"]]}
                />
                <Column items={[["decal", "Decal"], ["importTool", "Import"]]} />
            </Group>
            <Group title="Modify" width={362} inset={2} menu>
                <Large icon="hole" lines={["Hole"]} width={38} />
                <Large icon="fillet" lines={["Fillet"]} width={38} />
                <Column
                    width={77}
                    items={[["chamfer", "Chamfer"], ["shell", "Shell"], ["draft", "Draft"]]}
                />
                <Column
                    width={113}
                    items={[["thread", "Thread"], ["combine", "Combine"], ["thicken", "Thicken/ Offset"]]}
                />
                <Column items={[["split", "Split"], ["direct", "Direct"], ["deleteFace", "Delete Face"]]} />
            </Group>
            <Group title="Explore" width={63} center>
                <Large icon="shapeGen" lines={["Shape", "Generator"]} width={56} />
            </Group>
            <Group title="Work Features" width={127} inset={1}>
                <Large icon="plane" lines={["Plane"]} width={52} menu />
                <Column items={[["axis", "Axis", true], ["point", "Point", true], ["ucs", "UCS"]]} />
            </Group>
            <Group title="Pattern" width={55}>
                <PatternGrid>
                    <IconGrid
                        columns={2}
                        items={[
                            ["rectPattern", "Rectangular"],
                            ["mirror", "Mirror"],
                            ["circPattern", "Circular"],
                            ["sketchPattern", "Sketch driven"],
                        ]}
                    />
                </PatternGrid>
            </Group>
            <Group title="Create Freeform" width={119} inset={1}>
                <Large icon="box" lines={["Box"]} width={42} menu />
                <Column items={[["face", "Face"], ["convertTool", "Convert"]]} />
            </Group>
            <Group title="Surface" width={80}>
                <IconGrid
                    columns={3}
                    items={[
                        ["stitch", "Stitch"],
                        ["ruled", "Ruled surface"],
                        ["thickenSurface", "Thicken"],
                        ["patch", "Patch"],
                        ["trim", "Trim"],
                        ["repair", "Repair bodies"],
                        ["sculpt", "Sculpt"],
                        ["extend", "Extend"],
                        ["replace", "Replace face"],
                    ]}
                />
            </Group>
            <Group title="Simulation" width={68} center>
                <Large icon="stress" lines={["Stress", "Analysis"]} />
            </Group>
            <Group title="Convert" width={73} center>
                <Large icon="sheet" lines={["Convert to", "Sheet Metal"]} width={64} />
            </Group>
            <OverflowButton aria-label="More panels">
                <Icon name="overflow" />
                <Caret />
            </OverflowButton>
        </Ribbon>
        <Workspace>
            <Browser>
                <BrowserHead>
                    <HeadRow $end>
                        <Tool $width={14} aria-label="Close panel"><Icon name="panelClose" /></Tool>
                    </HeadRow>
                    <HeadRow>
                        <ModelMenu>
                            Model
                            <Caret $big $color="#555" />
                        </ModelMenu>
                        <Tool $width={16} aria-label="Panel help"><Icon name="panelHelp" /></Tool>
                    </HeadRow>
                    <HeadTools>
                        <Tool $width={16} aria-label="Filter"><Icon name="filter" /></Tool>
                        <Tool $width={16} aria-label="Find"><Icon name="binoculars" /></Tool>
                    </HeadTools>
                </BrowserHead>
                <Tree>
                    {nodes.map((node, index) => (
                        <TreeNode key={index} {...node} />
                    ))}
                </Tree>
            </Browser>
            <Stage>
                <Canvas>
                    <Model />
                    <CanvasIcons />
                    <CubeSpot>
                        <ViewCube />
                    </CubeSpot>
                    <NavBar>
                        <NavGlyphs />
                    </NavBar>
                    <MiniToolbar>
                        <Grip />
                        <MiniButton aria-label="Edit feature"><Icon name="editFeature" /></MiniButton>
                        <MiniButton $last aria-label="Edit sketch"><Icon name="editSketch" /></MiniButton>
                    </MiniToolbar>
                    <ShareButton aria-label="Share">
                        <svg width="28" height="32" viewBox="0 0 28 32" aria-hidden="true">
                            <path d="M14 0 28 8V24L14 32 0 24V8Z" fill="#5aaef2" />
                            <path d="M14 0 28 8 23 11 14 6 5 11 0 8Z" fill="#8cc7f8" />
                            <path d="M28 8V24L14 32V26L23 21V11Z" fill="#3f93dc" />
                            <path d="M14 6 23 11V21L14 26 5 21V11Z" fill="#4b9fe8" />
                            <path d="M5 21 14 16 23 21 14 26Z" fill="#8cc7f8" />
                            <path d="M18 11 9 16 18 21" fill="none" stroke="#fff" strokeWidth="2" />
                            <circle cx="18" cy="11" r="2.600" fill="#fff" />
                            <circle cx="9" cy="16" r="2.800" fill="#fff" />
                            <circle cx="18" cy="21" r="2.600" fill="#fff" />
                        </svg>
                    </ShareButton>
                </Canvas>
                <DocBar>
                    <Tool aria-label="Cascade"><Icon name="cascade" /></Tool>
                    <Tool aria-label="Tile"><Icon name="tiles" /></Tool>
                    <Tool aria-label="Tile horizontally"><Icon name="rows" /></Tool>
                    <Tool aria-label="Tile vertically"><Icon name="columns" /></Tool>
                    <Tool aria-label="Document list"><Icon name="up" /></Tool>
                    <DocTab>My Home</DocTab>
                    <DocTab $active>
                        Part1.ipt
                        <Icon name="tabClose" />
                    </DocTab>
                </DocBar>
            </Stage>
        </Workspace>
        <StatusBar>
            <StatusText>For Help, press F1</StatusText>
            <StatusCell>1</StatusCell>
            <StatusCell>1</StatusCell>
        </StatusBar>
    </Shell>
);

export default App;
